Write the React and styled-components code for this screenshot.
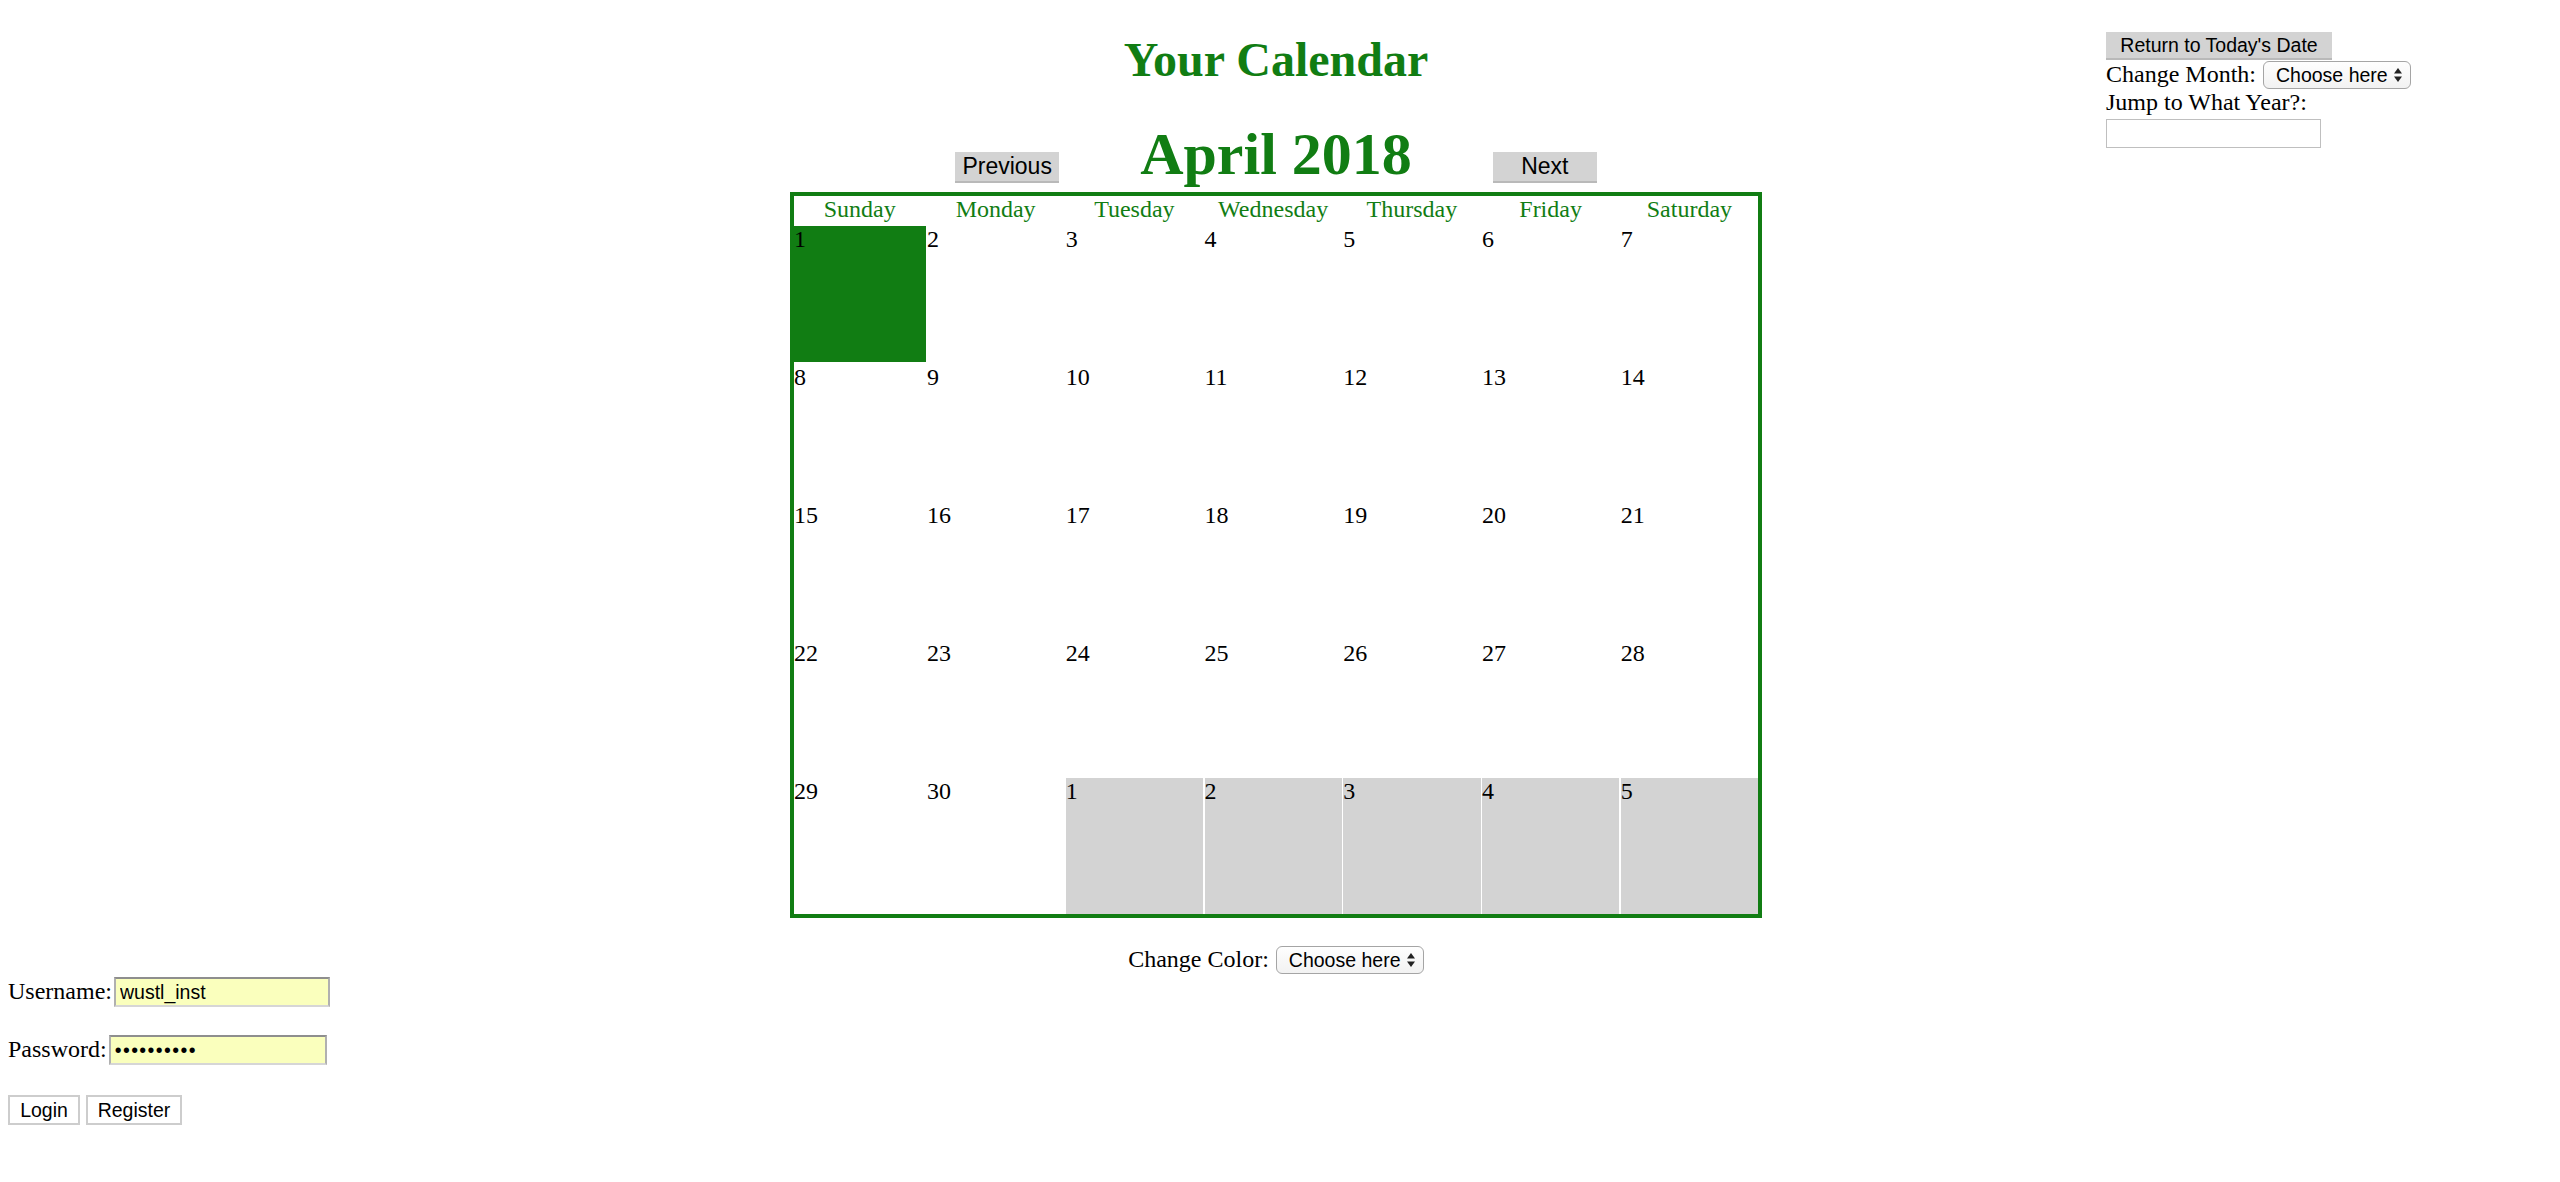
import React from "react";
import styled, { createGlobalStyle } from "styled-components";

const GREEN = "#117d13";
const SERIF = `"Liberation Serif", "Times New Roman", serif`;
const SANS = `"Liberation Sans", Arial, Helvetica, sans-serif`;

const GlobalStyle = createGlobalStyle`
  html, body { margin: 0; padding: 0; background: #fff; }
  body { font-family: ${SERIF}; font-size: 24px; color: #000; }
  * { box-sizing: border-box; }
`;

const Page = styled.div`
  width: 2560px;
  min-height: 1182px;
`;

const TopArea = styled.div`
  display: grid;
  grid-template-columns: 1fr auto 1fr;
  padding: 0 16px 0 8px;
`;

const CenterColumn = styled.div`
  grid-column: 2;
  display: flex;
  flex-direction: column;
  align-items: center;
`;

const Title = styled.h1`
  margin: 32px 0 0;
  font-size: 48px;
  font-weight: bold;
  line-height: 1.15;
  color: ${GREEN};
`;

const NavRow = styled.div`
  display: flex;
  align-items: baseline;
  gap: 81px;
  margin-top: 33px;
`;

const MonthTitle = styled.h2`
  margin: 0;
  font-size: 60px;
  font-weight: bold;
  line-height: 1.15;
  color: ${GREEN};
`;

const GrayButton = styled.button`
  width: ${(p) => p.$w}px;
  height: ${(p) => p.$h}px;
  margin: 0;
  padding: 0;
  border: none;
  border-bottom: 2px solid #b9b9b9;
  background: #d3d3d3;
  color: #000;
  font-family: ${SANS};
  font-size: ${(p) => p.$fs}px;
  text-align: center;
  white-space: nowrap;
`;

const Calendar = styled.div`
  margin-top: 3px;
  width: 972px;
  border: 4px solid ${GREEN};
  display: grid;
  grid-template-columns: 131.5px repeat(6, 1fr);
  grid-template-rows: 28px repeat(5, 136.3px);
  column-gap: 1.5px;
  row-gap: 1.7px;
  background: #fff;
`;

const DayName = styled.div`
  text-align: center;
  color: ${GREEN};
  line-height: normal;
`;

const DayCell = styled.div`
  line-height: normal;
  background: ${(p) =>
    p.$kind === "today" ? GREEN : p.$kind === "other" ? "#d3d3d3" : "transparent"};
`;

const InlineRow = styled.div`
  display: flex;
  align-items: baseline;
  gap: ${(p) => p.$gap ?? 7}px;
  margin-top: ${(p) => p.$mt ?? 0}px;
  white-space: nowrap;
`;

const SelectWrap = styled.span`
  position: relative;
  display: inline-block;
  width: 148px;
  height: 28px;
`;

const SelectEl = styled.select`
  appearance: none;
  -webkit-appearance: none;
  width: 100%;
  height: 100%;
  margin: 0;
  padding: 0 0 0 12px;
  border: 1.5px solid #a5a5a5;
  border-radius: 6px;
  background: linear-gradient(#fefefe, #f2f2f2);
  color: #000;
  font-family: ${SANS};
  font-size: 19.5px;
`;

const Arrows = styled.svg`
  position: absolute;
  right: 9px;
  top: 50%;
  transform: translateY(-50%);
  pointer-events: none;
`;

const SidePanel = styled.div`
  grid-column: 3;
  padding: 32px 0 0 344px;
  display: flex;
  flex-direction: column;
  align-items: flex-start;
`;

const JumpLabel = styled.div`
  margin-top: 2px;
  line-height: 22px;
  white-space: nowrap;
`;

const YearInput = styled.input`
  margin-top: 6px;
  width: 215px;
  height: 29px;
  border: 1px solid #bfbfbf;
  background: #fff;
  font-family: ${SANS};
  font-size: 19.5px;
  padding: 0 4px;
`;

const LoginForm = styled.form`
  display: flex;
  flex-direction: column;
  align-items: flex-start;
  gap: 28px;
  padding-left: 8px;
  margin: 3px 0 0;
`;

const FieldRow = styled.label`
  display: flex;
  align-items: baseline;
  gap: 2px;
  white-space: nowrap;
`;

const TextField = styled.input`
  width: ${(p) => p.$w}px;
  height: 30px;
  margin: 0;
  padding: 0 4px;
  border: 2px solid;
  border-color: #8e8e8e #b0b0b0 #d6d6d6 #b0b0b0;
  background: #faffbd;
  color: #000;
  font-family: ${SANS};
  font-size: 19.5px;
  letter-spacing: ${(p) => (p.type === "password" ? "1.4px" : "0")};
`;

const ButtonRow = styled.div`
  display: flex;
  gap: 6px;
  margin-top: 2px;
`;

const OutlineButton = styled.button`
  width: ${(p) => p.$w}px;
  height: 30px;
  margin: 0;
  padding: 0;
  border: 2px solid #cdcdcd;
  background: #fff;
  color: #000;
  font-family: ${SANS};
  font-size: 19.5px;
`;

function ChooseSelect() {
  return (
    <SelectWrap>
      <SelectEl defaultValue="">
        <option value="">Choose here</option>
      </SelectEl>
      <Arrows width="8" height="15" viewBox="0 0 8 15">
        <polygon points="0,6 4,0.5 8,6" fill="#222" />
        <polygon points="0,9 4,14.5 8,9" fill="#222" />
      </Arrows>
    </SelectWrap>
  );
}

const DAYS = ["Sunday", "Monday", "Tuesday", "Wednesday", "Thursday", "Friday", "Saturday"];

function buildCells() {
  const cells = [];
  for (let d = 1; d <= 30; d++) {
    cells.push({ n: d, kind: d === 1 ? "today" : "normal" });
  }
  for (let d = 1; d <= 5; d++) cells.push({ n: d, kind: "other" });
  return cells;
}

export default function App() {
  const cells = buildCells();
  return (
    <Page>
      <GlobalStyle />
      <TopArea>
        <CenterColumn>
          <Title>Your Calendar</Title>
          <NavRow>
            <GrayButton $w={104} $h={31} $fs={23}>Previous</GrayButton>
            <MonthTitle>April 2018</MonthTitle>
            <GrayButton $w={104} $h={31} $fs={23}>Next</GrayButton>
          </NavRow>
          <Calendar>
            {DAYS.map((d) => (
              <DayName key={d}>{d}</DayName>
            ))}
            {cells.map((c, i) => (
              <DayCell key={i} $kind={c.kind}>
                {c.n}
              </DayCell>
            ))}
          </Calendar>
          <InlineRow $mt={28}>
            <span>Change Color:</span>
            <ChooseSelect />
          </InlineRow>
        </CenterColumn>
        <SidePanel>
          <GrayButton $w={226} $h={28} $fs={19.5}>Return to Today's Date</GrayButton>
          <InlineRow $mt={1}>
            <span>Change Month:</span>
            <ChooseSelect />
          </InlineRow>
          <JumpLabel>Jump to What Year?:</JumpLabel>
          <YearInput type="text" />
        </SidePanel>
      </TopArea>
      <LoginForm onSubmit={(e) => e.preventDefault()}>
        <FieldRow>
          Username:
          <TextField $w={216} type="text" defaultValue="wustl_inst" />
        </FieldRow>
        <FieldRow>
          Password:
          <TextField $w={218} type="password" defaultValue="wustlinsts" />
        </FieldRow>
        <ButtonRow>
          <OutlineButton type="button" $w={72}>Login</OutlineButton>
          <OutlineButton type="button" $w={96}>Register</OutlineButton>
        </ButtonRow>
      </LoginForm>
    </Page>
  );
}
